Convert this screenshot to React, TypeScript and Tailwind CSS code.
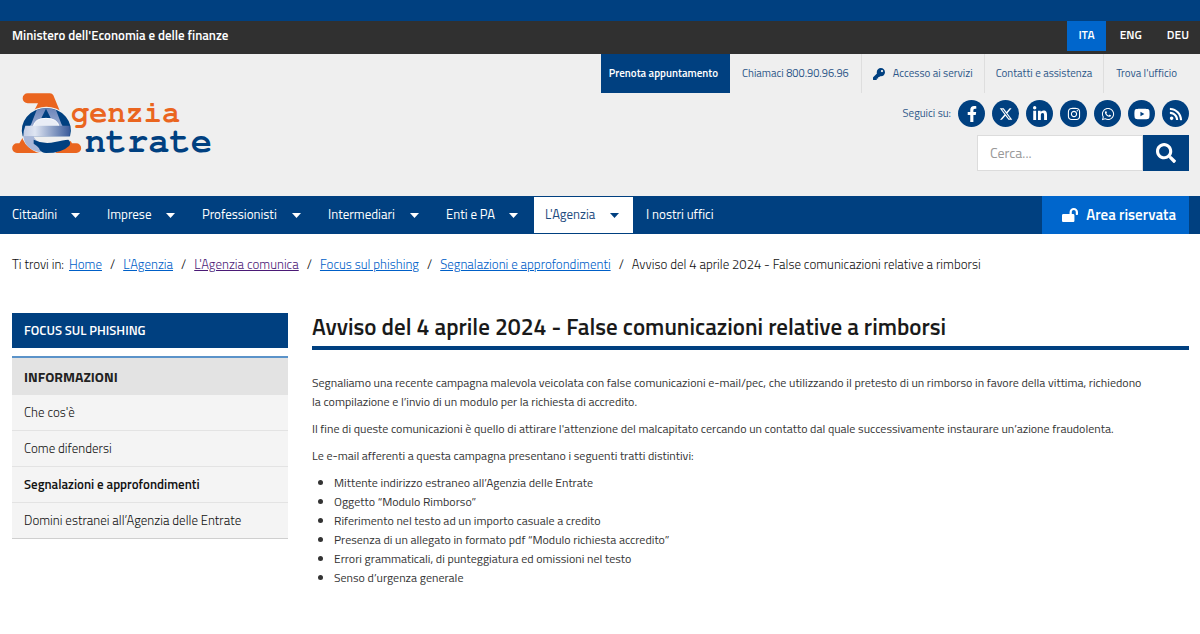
import type { ReactNode } from "react";
import {
  FaFacebookF,
  FaInstagram,
  FaKey,
  FaLinkedinIn,
  FaLockOpen,
  FaRss,
  FaSearch,
  FaWhatsapp,
  FaYoutube,
} from "react-icons/fa";
import { FaXTwitter } from "react-icons/fa6";

function Logo() {
  return (
    <svg
      viewBox="36 30 612 216"
      className="h-[72px] w-[204px]"
      role="img"
      aria-label="Agenzia Entrate"
    >
      <defs>
        <linearGradient id="bar" x1="0" y1="0" x2="1" y2="0">
          <stop offset="0" stopColor="#c3cce3" />
          <stop offset="0.25" stopColor="#dfe5f2" />
          <stop offset="1" stopColor="#3a5b9b" />
        </linearGradient>
        <linearGradient id="arch" x1="0" y1="0" x2="0" y2="1">
          <stop offset="0" stopColor="#6d86ba" />
          <stop offset="1" stopColor="#b3c0de" />
        </linearGradient>
      </defs>
      <path
        d="M83 37H150Q157 37 160 43L178 86V92H104V86L114 67H83A15 15 0 0 1 83 37Z"
        fill="#ea651f"
      />
      <path d="M51 187H58L68 170L125 216H51A14.5 14.5 0 0 1 51 187Z" fill="#ea651f" />
      <path d="M165 216L212 180L216 187H229A14.5 14.5 0 0 1 229 216Z" fill="#ea651f" />
      <ellipse cx="139" cy="148" rx="76" ry="71" fill="#efefef" />
      <path d="M139 82A71 66 0 0 1 210 166H68A71 66 0 0 1 139 82Z" fill="#004080" />
      <path d="M110 87Q139 77 168 87L184 128L204 166H74L94 128Z" fill="url(#arch)" />
      <path d="M138 83L153 113H123Z" fill="#004080" />
      <path
        d="M100 136Q104 112 138 112Q172 112 177 136Z"
        fill="#e9edf6"
        stroke="#fff"
        strokeWidth="3"
      />
      <path d="M76 134H209Q211 150 209 166H70Q70 148 76 134Z" fill="url(#bar)" />
      <path d="M70 166H101Q104 180 126 187L122 214Q76 208 70 166Z" fill="#a9b7d8" />
      <path
        d="M101 176Q130 191 165 183Q190 177 205 176Q214 182 208 194Q186 216 138 216Q124 215 119 206Q118 198 101 188Z"
        fill="#004080"
      />
      <text
        x="213"
        y="123"
        fontSize="91"
        fontWeight="700"
        fill="#ea651f"
        className="font-['FreeMono','Liberation_Mono',monospace]"
      >
        genzia
      </text>
      <text
        x="254"
        y="214"
        fontSize="106"
        fontWeight="700"
        fill="#004080"
        className="font-['FreeMono','Liberation_Mono',monospace]"
      >
        ntrate
      </text>
    </svg>
  );
}

const socials: { label: string; icon: ReactNode }[] = [
  { label: "Facebook", icon: <FaFacebookF className="size-4" /> },
  { label: "X", icon: <FaXTwitter className="size-3.5" /> },
  { label: "LinkedIn", icon: <FaLinkedinIn className="size-4" /> },
  { label: "Instagram", icon: <FaInstagram className="size-3.5" /> },
  { label: "WhatsApp", icon: <FaWhatsapp className="size-3.5" /> },
  { label: "YouTube", icon: <FaYoutube className="size-4" /> },
  { label: "RSS", icon: <FaRss className="size-3.5" /> },
];

const menu = [
  { label: "Cittadini", width: "w-[95px]" },
  { label: "Imprese", width: "w-[95px]" },
  { label: "Professionisti", width: "w-[126px]" },
  { label: "Intermediari", width: "w-[118px]" },
  { label: "Enti e PA", width: "w-[99px]" },
  { label: "L'Agenzia", width: "w-[101px]", active: true },
];

const crumbs = [
  { label: "Home" },
  { label: "L'Agenzia" },
  { label: "L'Agenzia comunica", visited: true },
  { label: "Focus sul phishing" },
  { label: "Segnalazioni e approfondimenti" },
];

const sideLinks = [
  { label: "Che cos'è" },
  { label: "Come difendersi" },
  { label: "Segnalazioni e approfondimenti", current: true },
  { label: "Domini estranei all’Agenzia delle Entrate" },
];

const traits = [
  "Mittente indirizzo estraneo all’Agenzia delle Entrate",
  "Oggetto “Modulo Rimborso”",
  "Riferimento nel testo ad un importo casuale a credito",
  "Presenza di un allegato in formato pdf “Modulo richiesta accredito”",
  "Errori grammaticali, di punteggiatura ed omissioni nel testo",
  "Senso d’urgenza generale",
];

export default function App() {
  return (
    <div className="min-h-screen bg-white font-['Titillium_Web',Roboto,sans-serif] text-[13px] text-[#222]">
      <div className="h-[21px] bg-[#004080]" />

      <div className="flex h-[33px] items-start justify-between bg-[#303030] pl-3 font-semibold text-white">
        <a href="#" className="leading-7">
          Ministero dell'Economia e delle finanze
        </a>
        <nav aria-label="Lingua" className="flex gap-[3px] text-xs leading-[27px]">
          <a href="#" className="h-[30px] bg-[#0066cc] px-[11px]">
            ITA
          </a>
          <a href="#" className="px-[11px]">
            ENG
          </a>
          <a href="#" className="px-[11px]">
            DEU
          </a>
        </nav>
      </div>

      <header className="flex h-[142px] justify-between bg-[#efefef] pr-[11px] pl-3">
        <a href="#" className="pt-[37px]">
          <Logo />
        </a>
        <div className="flex flex-col items-end">
          <nav aria-label="Servizi" className="flex h-[39px] items-stretch text-[11px] text-[#2c5688]">
            <a href="#" className="flex items-center bg-[#004080] pr-3 pl-2 font-semibold text-white">
              Prenota appuntamento
            </a>
            <a href="#" className="flex items-center border-r border-[#dedede] px-3">
              Chiamaci 800.90.96.96
            </a>
            <a href="#" className="flex items-center gap-2 border-r border-[#dedede] px-[11px]">
              <FaKey className="size-3 text-[#004080]" />
              Accesso ai servizi
            </a>
            <a href="#" className="flex items-center border-r border-[#dedede] px-[11px]">
              Contatti e assistenza
            </a>
            <a href="#" className="flex items-center px-3">
              Trova l'ufficio
            </a>
          </nav>
          <div className="mt-[7px] flex items-center gap-[7px]">
            <span className="text-[11px] text-[#2c5688]">Seguici su:</span>
            {socials.map((s) => (
              <a
                key={s.label}
                href="#"
                aria-label={s.label}
                className="flex size-[27px] items-center justify-center rounded-full bg-[#004080] text-white"
              >
                {s.icon}
              </a>
            ))}
          </div>
          <form className="mt-2 flex h-9 w-[212px]">
            <input
              type="text"
              aria-label="Cerca"
              placeholder="Cerca..."
              className="min-w-0 flex-1 border border-[#dcdcdc] bg-white px-3 text-sm placeholder:text-[#999]"
            />
            <button
              type="button"
              aria-label="Avvia ricerca"
              className="flex w-[46px] items-center justify-center bg-[#004080] text-white"
            >
              <FaSearch className="size-5" />
            </button>
          </form>
        </div>
      </header>

      <nav aria-label="Principale" className="flex h-[38px] bg-[#004080] pr-[11px] text-white">
        {menu.map((m) => (
          <button
            key={m.label}
            type="button"
            className={`flex items-center justify-between ${m.width} ${
              m.active
                ? "border border-[#004080] bg-white pr-3.5 pl-[11px] text-[#1f4c80]"
                : "pr-[15px] pl-3"
            }`}
          >
            {m.label}
            <svg viewBox="0 0 9 5" className="h-[5px] w-[9px]" aria-hidden="true">
              <path d="M0 0H9L4.5 5Z" fill={m.active ? "#004080" : "#fff"} />
            </svg>
          </button>
        ))}
        <a href="#" className="flex items-center px-3">
          I nostri uffici
        </a>
        <a
          href="#"
          className="ml-auto flex items-center gap-2 bg-[#0066cc] pr-[13px] pl-5 text-[15px] font-semibold"
        >
          <FaLockOpen className="size-4" />
          Area riservata
        </a>
      </nav>

      <nav aria-label="Percorso" className="px-3 pt-5 leading-5 font-light text-[#111]">
        <ol className="flex">
          <li className="mr-[5px]">Ti trovi in:</li>
          {crumbs.map((c) => (
            <li key={c.label}>
              <a
                href="#"
                className={`underline ${c.visited ? "text-[#4b1a76]" : "text-[#0060c8]"}`}
              >
                {c.label}
              </a>
              <span className="mx-2">/</span>
            </li>
          ))}
          <li>Avviso del 4 aprile 2024 - False comunicazioni relative a rimborsi</li>
        </ol>
      </nav>

      <div className="flex items-start gap-6 pt-[39px] pr-[11px] pl-3">
        <aside className="w-[276px] shrink-0">
          <h2 className="bg-[#004080] px-3 leading-[35px] font-semibold text-white">
            FOCUS SUL PHISHING
          </h2>
          <div className="mt-2 border-t-2 border-[#5b93c9] bg-[#f4f4f4]">
            <h3 className="bg-[#e3e3e3] px-3 text-sm leading-[37px] font-bold">
              INFORMAZIONI
            </h3>
            <ul>
              {sideLinks.map((l) => (
                <li
                  key={l.label}
                  className="border-b border-[#e3e3e3] px-3 leading-[35px] last:border-[#cfcfcf]"
                >
                  <a
                    href="#"
                    className={l.current ? "font-semibold text-[#111]" : "font-light text-[#111]"}
                  >
                    {l.label}
                  </a>
                </li>
              ))}
            </ul>
          </div>
        </aside>

        <main className="min-w-0 flex-1 text-xs leading-[19px] text-[#333]">
          <h1 className="border-b-4 border-[#004080] pb-[5px] text-[23px] leading-7 font-semibold text-[#1a1a1a]">
            Avviso del 4 aprile 2024 - False comunicazioni relative a rimborsi
          </h1>
          <p className="mt-[23px]">
            Segnaliamo una recente campagna malevola veicolata con false comunicazioni e-mail/pec,
            che utilizzando il pretesto di un rimborso in favore della vittima, richiedono
            {" la\u00a0compilazione"} e l’invio di un modulo per la richiesta di accredito.
          </p>
          <p className="mt-2">
            Il fine di queste comunicazioni è quello di attirare l'attenzione del malcapitato
            cercando un contatto dal quale successivamente instaurare un’azione fraudolenta.
          </p>
          <p className="mt-2">
            Le e-mail afferenti a questa campagna presentano i seguenti tratti distintivi:
          </p>
          <ul className="mt-2 list-disc pl-[22px]">
            {traits.map((t) => (
              <li key={t}>{t}</li>
            ))}
          </ul>
        </main>
      </div>
    </div>
  );
}
